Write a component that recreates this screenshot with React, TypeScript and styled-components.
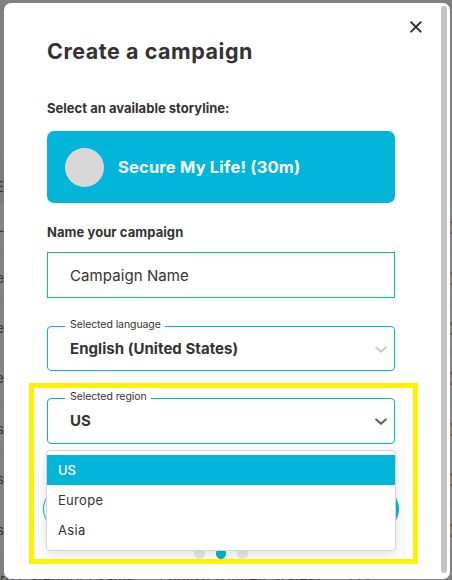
import React from 'react';
import styled, { createGlobalStyle } from 'styled-components';

const cyan = '#02b5d9';
const ink = '#333';

const GlobalStyle = createGlobalStyle`
  *, *::before, *::after { box-sizing: border-box; }
  body { margin: 0; font-family: Inter, "Liberation Sans", sans-serif; color: ${ink}; }
`;

const Page = styled.main`
  position: relative;
  width: 452px;
  height: 580px;
  overflow: hidden;
  background: #808080;
`;

/* Dimmed table that shows around the edges of the dialog. */
const Backdrop = styled.div`
  position: absolute;
  inset: 0;
  display: flex;
  flex-direction: column;
  padding-top: 155px;
  color: #39363a;
  font-size: 14px;
`;

const TableRow = styled.div<{ $head?: boolean }>`
  display: flex;
  flex: none;
  align-items: center;
  justify-content: space-between;
  height: ${p => (p.$head ? 50 : 42.4)}px;
  padding-top: ${p => (p.$head ? 13 : 1)}px;
  margin-bottom: ${p => (p.$head ? 0 : 8)}px;
  background: ${p => (p.$head ? '#7c7c7d' : '#858484')};
  white-space: nowrap;
`;

const Clip = styled.span<{ $right?: boolean }>`
  display: flex;
  justify-content: ${p => (p.$right ? 'flex-start' : 'flex-end')};
  width: ${p => (p.$right ? 2 : 4)}px;
`;

const LastRow = styled.div`
  display: flex;
  gap: 25px;
  padding-top: 12px;
  line-height: 18px;
  letter-spacing: 0.5px;
  white-space: nowrap;
`;

const Dialog = styled.section`
  position: relative;
  display: flex;
  width: 446px;
  height: 576px;
  margin: 3px 0 0 4px;
  padding: 3px 3px 6px 43px;
  background: #fff;
  border-radius: 7px;
`;

const Form = styled.div`
  display: flex;
  flex-direction: column;
  width: 348px;
`;

const Side = styled.div`
  display: flex;
  flex: 1;
  justify-content: space-between;
  align-items: flex-start;
`;

const CloseButton = styled.button`
  display: flex;
  margin: 14px 0 0 14px;
  padding: 0;
  border: 0;
  background: none;
`;

const ScrollThumb = styled.div`
  width: 6px;
  height: 567px;
  border-radius: 3px;
  background: #c3c3c3;
`;

const Title = styled.h1`
  margin: 32px 0 0;
  font-size: 21.5px;
  line-height: 26px;
  font-weight: 700;
  letter-spacing: 0.54px;
  white-space: nowrap;
`;

const Label = styled.div<{ $top: number; $spacing: number }>`
  margin-top: ${p => p.$top}px;
  font-size: 13px;
  line-height: 16px;
  font-weight: 700;
  letter-spacing: ${p => p.$spacing}px;
  white-space: nowrap;
`;

const Storyline = styled.div`
  display: flex;
  align-items: center;
  gap: 14px;
  height: 72px;
  margin-top: 15px;
  padding-left: 18px;
  border-radius: 7px;
  background: ${cyan};
  color: #fff;
  font-size: 16.5px;
  font-weight: 700;
  letter-spacing: 0.18px;
`;

const Avatar = styled.span`
  width: 39px;
  height: 39px;
  border-radius: 50%;
  background: #d8d8d8;
`;

const NameInput = styled.div`
  display: flex;
  align-items: center;
  height: 46px;
  margin-top: 12px;
  padding: 1px 22px 0;
  border: 1px solid #0ccb6c;
  font-size: 15px;
  letter-spacing: 0.08px;
`;

const Select = styled.div<{ $top: number; $height: number }>`
  position: relative;
  display: flex;
  align-items: center;
  justify-content: space-between;
  height: ${p => p.$height}px;
  margin-top: ${p => p.$top}px;
  padding: 0 7px 0 22px;
  border: 1px solid ${cyan};
  border-radius: 4px;
  font-size: 15px;
  line-height: 18px;
  font-weight: 700;
  letter-spacing: 0.05px;
`;

const Legend = styled.span<{ $width: number }>`
  position: absolute;
  top: -9px;
  left: 17px;
  width: ${p => p.$width}px;
  padding-left: 5px;
  background: #fff;
  font-size: 10.5px;
  line-height: 14px;
  font-weight: 400;
  letter-spacing: -0.08px;
  white-space: nowrap;
`;

const Menu = styled.div`
  position: absolute;
  top: 51px;
  left: -2px;
  z-index: 1;
  width: 350px;
  height: 101px;
  padding: 4px 0;
  border: 1px solid #d5d5d5;
  border-radius: 4px;
  background: #fff;
  box-shadow: 0 3px 12px rgba(0, 0, 0, 0.13);
`;

const Option = styled.div<{ $active?: boolean }>`
  display: flex;
  align-items: center;
  height: 30px;
  padding-left: 11px;
  background: ${p => (p.$active ? cyan : 'transparent')};
  color: ${p => (p.$active ? '#fff' : ink)};
  font-size: 13px;
  font-weight: ${p => (p.$active ? 500 : 400)};
  letter-spacing: ${p => (p.$active ? 0 : 0.3)}px;
`;

const Actions = styled.div`
  display: flex;
  justify-content: space-between;
  margin: 42px -4px 0;
`;

const Pill = styled.button<{ $filled?: boolean }>`
  width: 160px;
  height: 46px;
  border: 1px solid ${cyan};
  border-radius: 23px;
  background: ${p => (p.$filled ? cyan : '#fff')};
`;

const Steps = styled.div`
  display: flex;
  justify-content: center;
  gap: 11px;
  margin-top: 16px;
`;

const Dot = styled.span<{ $active?: boolean }>`
  width: 10.5px;
  height: 11px;
  border-radius: 50%;
  background: ${p => (p.$active ? cyan : '#e6e9ee')};
`;

const Highlight = styled.div`
  position: absolute;
  z-index: 2;
  top: 380px;
  left: 25px;
  width: 389px;
  height: 181px;
  border: 5px solid #fff200;
  pointer-events: none;
`;

const ChevronIcon = styled.svg`
  flex: none;
  margin-top: 2px;
`;

const Chevron = ({ color }: { color: string }) => (
  <ChevronIcon width="12" height="8" viewBox="0 0 12 8" fill="none" stroke={color} strokeWidth="2.1">
    <path d="M1.3 1.5 6 5.8l4.7-4.3" strokeLinecap="round" strokeLinejoin="round" />
  </ChevronIcon>
);

const edgeRows: [string, string][] = [
  ['L', ')'],
  ['re', ')'],
  ['re', ')'],
  ['re', ')'],
  ['s', ')'],
  ['s', ')'],
  ['s', ')'],
];

export default function App() {
  return (
    <Page>
      <GlobalStyle />
      <Backdrop aria-hidden>
        <TableRow $head>
          <Clip>E</Clip>
        </TableRow>
        {edgeRows.map(([left, right], i) => (
          <TableRow key={i}>
            <Clip>{left}</Clip>
            <Clip $right>{right}</Clip>
          </TableRow>
        ))}
        <LastRow>
          <span>ro Category Exams</span>
          <span>English (United States)</span>
          <span>715</span>
        </LastRow>
      </Backdrop>
      <Dialog>
        <Form>
          <Title>Create a campaign</Title>
          <Label $top={36} $spacing={0.02}>Select an available storyline:</Label>
          <Storyline>
            <Avatar />
            Secure My Life! (30m)
          </Storyline>
          <Label $top={21} $spacing={0.07}>Name your campaign</Label>
          <NameInput>Campaign Name</NameInput>
          <Select $top={28} $height={45}>
            <Legend $width={100}>Selected language</Legend>
            English (United States)
            <Chevron color="#cbcbcb" />
          </Select>
          <Select $top={27} $height={46}>
            <Legend $width={86}>Selected region</Legend>
            US
            <Chevron color="#606060" />
            <Menu>
              <Option $active>US</Option>
              <Option>Europe</Option>
              <Option>Asia</Option>
            </Menu>
          </Select>
          <Actions>
            <Pill aria-label="Back" />
            <Pill $filled aria-label="Next" />
          </Actions>
          <Steps>
            <Dot />
            <Dot $active />
            <Dot />
          </Steps>
        </Form>
        <Side>
          <CloseButton aria-label="Close">
            <svg width="14" height="14" viewBox="0 0 14 14" stroke={ink} strokeWidth="2" strokeLinecap="round">
              <path d="M2.2 2.2l9.4 9.4M11.6 2.2l-9.4 9.4" />
            </svg>
          </CloseButton>
          <ScrollThumb />
        </Side>
        <Highlight />
      </Dialog>
    </Page>
  );
}
